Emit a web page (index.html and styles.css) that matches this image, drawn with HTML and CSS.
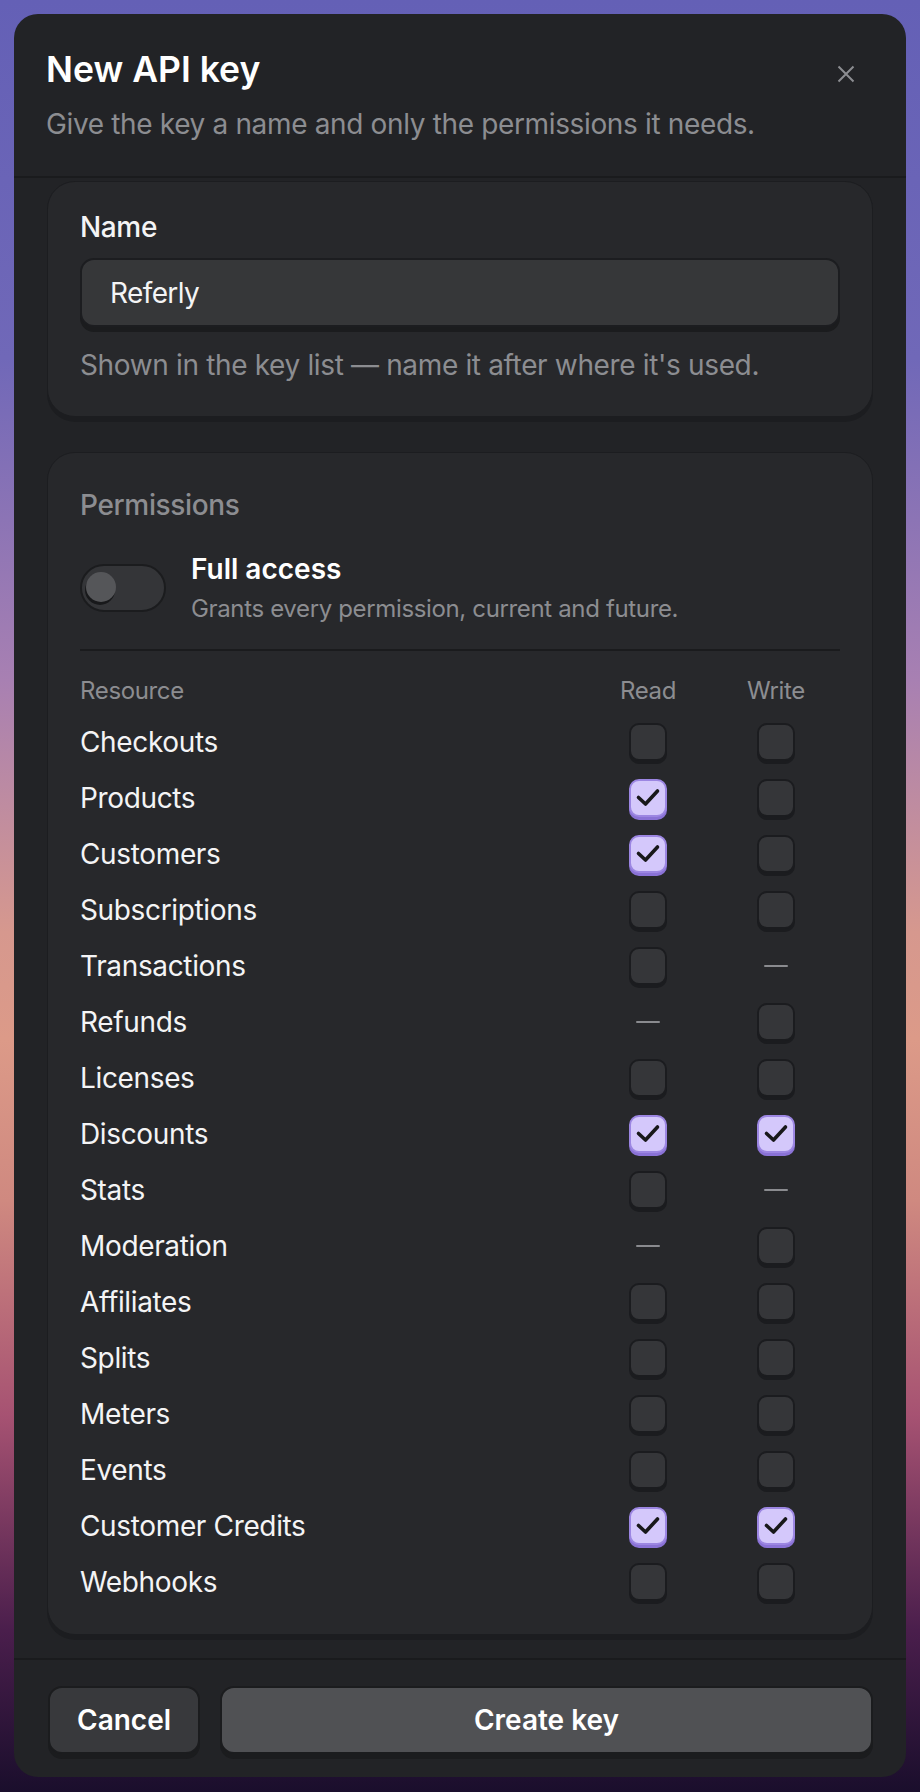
FILE: index.html
```html
<!DOCTYPE html>
<html lang="en">

    <head>
        <meta charset="UTF-8">
        <meta name="viewport" content="width=device-width, initial-scale=1.0">
        <title>New API key</title>
        <link rel="stylesheet" href="styles.css">
    </head>

    <body>
        <div class="dialog">
            <div class="dialog-head">
                <div class="head-top">
                    <h1>New API key</h1>
                    <button class="close" aria-label="Close">
                        <svg width="20" height="20" viewBox="0 0 20 20"><path d="M2.5 2.5 L17.5 17.5 M17.5 2.5 L2.5 17.5" stroke="#8c8d91" stroke-width="2" fill="none"/></svg>
                    </button>
                </div>
                <p class="subtitle">Give the key a name and only the permissions it needs.</p>
            </div>

            <div class="dialog-body">
                <div class="card name-card">
                    <label for="keyname" class="label">Name</label>
                    <input type="text" id="keyname" class="text-input" value="Referly">
                    <p class="hint">Shown in the key list — name it after where it's used.</p>
                </div>

                <div class="card perm-card">
                    <div class="label muted">Permissions</div>
                    <div class="full-row">
                        <div class="toggle"><span class="knob"></span></div>
                        <div>
                            <div class="full-title">Full access</div>
                            <div class="full-sub">Grants every permission, current and future.</div>
                        </div>
                    </div>
                    <div class="divider"></div>

                    <div class="perm-row perm-head">
                        <span>Resource</span>
                        <span class="cell">Read</span>
                        <span class="cell">Write</span>
                    </div>
                    <div id="rows"></div>
                </div>
            </div>

            <div class="dialog-foot">
                <button class="btn btn-cancel">Cancel</button>
                <button class="btn btn-create">Create key</button>
            </div>
        </div>

        <script>
            // r / w: 0 = empty, 1 = checked, 2 = not available
            const resources = [
                ["Checkouts", 0, 0],
                ["Products", 1, 0],
                ["Customers", 1, 0],
                ["Subscriptions", 0, 0],
                ["Transactions", 0, 2],
                ["Refunds", 2, 0],
                ["Licenses", 0, 0],
                ["Discounts", 1, 1],
                ["Stats", 0, 2],
                ["Moderation", 2, 0],
                ["Affiliates", 0, 0],
                ["Splits", 0, 0],
                ["Meters", 0, 0],
                ["Events", 0, 0],
                ["Customer Credits", 1, 1],
                ["Webhooks", 0, 0]
            ]

            const check = '<svg width="34" height="34" viewBox="0 0 34 34"><path d="M7.5 16.5 L14.5 23 L26.5 10" stroke="#18181a" stroke-width="3.6" fill="none" stroke-linecap="round" stroke-linejoin="round"/></svg>'

            function cell(state) {
                if (state === 2) return '<span class="cell"><span class="dash"></span></span>'
                if (state === 1) return '<span class="cell"><span class="box on">' + check + '</span></span>'
                return '<span class="cell"><span class="box"></span></span>'
            }

            document.getElementById("rows").innerHTML = resources.map(r =>
                '<div class="perm-row"><span>' + r[0] + '</span>' + cell(r[1]) + cell(r[2]) + '</div>'
            ).join("")
        </script>
    </body>

</html>
```

FILE: styles.css
```css
* {
    box-sizing: border-box;
}

body {
    margin: 0;
    padding: 14px;
    min-height: 1792px;
    font-family: Inter, 'Liberation Sans', sans-serif;
    letter-spacing: -0.022em;
    color: #f4f4f5;
    background: linear-gradient(180deg, #6460b6 0%, #7068b8 20%, #a880b2 38%, #d6988e 52%, #dc9a88 58%, #cf8980 67%, #a65272 79%, #4a1e4c 91%, #1a0e2c 100%);
}

.dialog {
    height: 1763px;
    background: #222326;
    border-radius: 24px;
    display: flex;
    flex-direction: column;
    overflow: hidden;
}

.dialog-head {
    padding: 36px 40px 34px 32px;
    border-bottom: 2px solid #1a1b1d;
}

.head-top {
    display: flex;
    justify-content: space-between;
    align-items: flex-start;
}

h1 {
    margin: 0;
    font-size: 35.5px;
    line-height: 40px;
    font-weight: 600;
    letter-spacing: 0;
    color: #fff;
}

.close {
    width: 40px;
    height: 40px;
    margin-top: 4px;
    padding: 0;
    border: none;
    background: none;
    display: flex;
    align-items: center;
    justify-content: center;
}

.subtitle {
    margin: 12px 0 0;
    font-size: 28px;
    line-height: 36px;
    color: #8c8d91;
}

.dialog-body {
    flex: 1;
    padding: 3px 33px 0 33px;
    overflow: hidden;
}

.card {
    background: #27282b;
    border: 1px solid #1c1d20;
    border-radius: 28px;
    box-shadow: 0 5px 0 #1c1d20;
    padding: 0 32px;
}

.name-card {
    padding-top: 27px;
    padding-bottom: 33px;
}

.label {
    display: block;
    font-size: 28px;
    line-height: 36px;
    font-weight: 500;
    color: #f4f4f5;
}

.muted {
    color: #8c8d91;
}

.text-input {
    display: block;
    width: 100%;
    height: 69px;
    margin-top: 13px;
    padding: 0 28px;
    background: #363739;
    border: 2px solid #1c1d20;
    border-radius: 14px;
    box-shadow: 0 5px 0 #1b1c1e;
    font-family: inherit;
    font-size: 28px;
    letter-spacing: -0.022em;
    color: #f4f4f5;
    outline: none;
}

.hint {
    margin: 20px 0 0;
    font-size: 28px;
    line-height: 36px;
    color: #8c8d91;
}

.perm-card {
    margin-top: 35px;
    padding-top: 34px;
    padding-bottom: 24px;
}

.full-row {
    display: flex;
    align-items: center;
    gap: 25px;
    margin-top: 28px;
}

.toggle {
    width: 86px;
    height: 48px;
    border-radius: 24px;
    background: #343538;
    border: 2px solid #1b1c1e;
    display: flex;
    align-items: center;
    padding-left: 4px;
}

.knob {
    width: 30px;
    height: 30px;
    margin-top: -3px;
    border-radius: 50%;
    background: #555659;
    box-shadow: -1px 3px 0 #18191b;
}

.full-title {
    font-size: 28px;
    line-height: 36px;
    font-weight: 600;
    letter-spacing: 0;
    color: #fff;
}

.full-sub {
    margin-top: 6px;
    font-size: 24px;
    line-height: 32px;
    color: #8c8d91;
}

.divider {
    height: 2px;
    background: #1a1b1d;
    margin: 24px 0;
}

.perm-row {
    display: grid;
    grid-template-columns: 1fr 128px 128px;
    align-items: center;
    height: 56px;
    font-size: 28px;
    line-height: 36px;
    color: #f4f4f5;
}

.perm-head {
    height: 32px;
    margin-bottom: 7px;
    font-size: 24px;
    line-height: 32px;
    color: #8c8d91;
}

.cell {
    display: flex;
    justify-content: center;
    align-items: center;
}

.box {
    width: 38px;
    height: 38px;
    border: 2px solid #1b1c1f;
    border-radius: 10px;
    background: #353639;
    box-shadow: 0 3px 0 #1b1c1f;
}

.box.on {
    background: #d4c8fb;
    border-color: #9c86e2;
    box-shadow: 0 3px 0 #8a72d6;
}

.box svg {
    display: block;
}

.dash {
    width: 24px;
    height: 2px;
    border-radius: 1px;
    background: #8a8b8f;
}

.dialog-foot {
    display: flex;
    gap: 20px;
    padding: 26px 33px 23px 34px;
    border-top: 2px solid #1a1b1d;
}

.btn {
    height: 68px;
    padding: 0 27px;
    border: 2px solid #1b1c1e;
    border-radius: 14px;
    box-shadow: 0 5px 0 #1b1c1e;
    font-family: inherit;
    font-size: 28px;
    font-weight: 600;
    letter-spacing: 0;
    color: #fff;
    cursor: pointer;
}

.btn-cancel {
    background: #38393c;
}

.btn-create {
    flex: 1;
    background: #505154;
}
```
